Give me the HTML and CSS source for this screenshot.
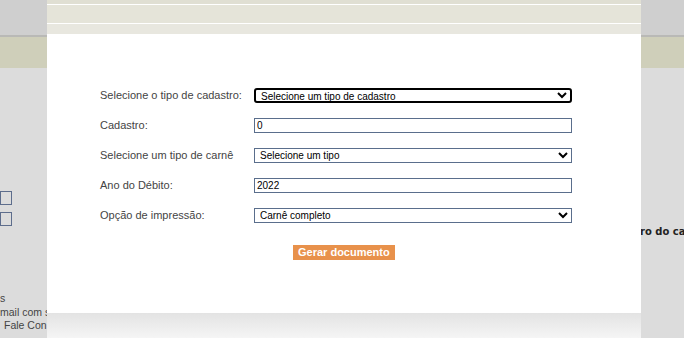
FILE: index.html
```html
<!DOCTYPE html>
<html lang="pt-BR">
  <head>
    <meta charset="UTF-8" />
    <title>Emissão de carnê</title>
    <link rel="stylesheet" href="styles.css">
  </head>
  <body>
    <div class="topbar"></div>
    <div class="menubar"></div>
    <div class="page">
      <div class="side">
        <div class="side-fields">
          <input class="side-input" type="text">
          <input class="side-input" type="text">
        </div>
        <div class="side-text">
          <div class="line-s">s</div>
          <div class="line-m">mail com s</div>
          <div class="line-f">Fale Con</div>
        </div>
      </div>
      <div class="gap"></div>
      <div class="aside">
        <div class="aside-title">ro do ca</div>
      </div>
    </div>

    <div class="modal">
      <div class="modal-head">
        <div class="stripe s1"></div>
        <div class="stripe s2"></div>
        <div class="stripe s3"></div>
      </div>
      <div class="modal-body">
        <form class="form">
          <label>Selecione o tipo de cadastro:</label>
          <select class="field focused">
            <option>Selecione um tipo de cadastro</option>
          </select>

          <label>Cadastro:</label>
          <input class="field" type="text" value="0">

          <label>Selecione um tipo de carnê</label>
          <select class="field">
            <option>Selecione um tipo</option>
          </select>

          <label>Ano do Débito:</label>
          <input class="field" type="text" value="2022">

          <label>Opção de impressão:</label>
          <select class="field">
            <option>Carnê completo</option>
          </select>
        </form>
        <div class="actions">
          <button type="button" class="btn">Gerar documento</button>
        </div>
      </div>
      <div class="modal-foot"></div>
    </div>
  </body>
</html>
```

FILE: styles.css
```css
body {
  margin: 0;
  background: #dcdcdc;
  font-family: "Liberation Sans", Arial, sans-serif;
  color: #444;
  height: 338px;
  overflow: hidden;
}
.topbar {
  height: 35px;
  background: #cfcfcf;
  border-bottom: 2px solid #b9b9b6;
}
.menubar {
  height: 31px;
  background: #cfcfba;
}
.page {
  display: grid;
  grid-template-columns: 47px 1fr 44px;
}
.side-fields {
  display: flex;
  flex-direction: column;
  gap: 7px;
  padding-top: 123px;
}
.side-input {
  box-sizing: border-box;
  width: 12px;
  height: 14px;
  margin: 0;
  padding: 0;
  border: 1px solid #5d6d8c;
  background: #dcdcdc;
}
.side-text {
  padding-top: 66px;
  font-size: 10.5px;
  line-height: 13.5px;
  color: #444;
  white-space: nowrap;
}
.line-f {
  margin-left: 4px;
}
.aside {
  padding-top: 158px;
}
.aside-title {
  white-space: nowrap;
  font-family: "DejaVu Sans", Verdana, sans-serif;
  font-weight: bold;
  font-size: 10px;
  color: #222;
}

/* janela modal */
.modal {
  position: fixed;
  top: 0;
  left: 47px;
  width: 594px;
  height: 338px;
  display: flex;
  flex-direction: column;
  background: #fff;
}
.stripe.s1 {
  height: 4px;
  background: #e0dfd3;
  border-bottom: 1px solid #fff;
}
.stripe.s2 {
  height: 18px;
  background: #e5e4d9;
  border-bottom: 1px solid #fff;
}
.stripe.s3 {
  height: 10px;
  background: #e8e7df;
}
.modal-body {
  flex-grow: 1;
  padding: 54px 0 0 53px;
}
.form {
  display: grid;
  grid-template-columns: 154px 318px;
  row-gap: 15px;
  align-items: center;
}
.form label {
  font-size: 11px;
  line-height: 13px;
  white-space: nowrap;
  color: #444;
}
.field {
  box-sizing: border-box;
  width: 318px;
  height: 15px;
  margin: 0;
  padding: 0 2px;
  border: 1px solid #5a6e8c;
  border-radius: 0;
  background: #fff;
  font-family: "Liberation Sans", Tahoma, sans-serif;
  font-size: 10px;
  color: #000;
  outline: none;
}
select.field {
  padding: 0 1px;
}
.field.focused {
  border: 2px solid #000;
  border-radius: 3px;
}
.actions {
  padding: 19px 0 0 193px;
}
.btn {
  height: 15px;
  padding: 0 5px;
  border: none;
  background: #e8914b;
  color: #fff;
  font-family: "Liberation Sans", Arial, sans-serif;
  font-weight: bold;
  font-size: 11px;
  line-height: 15px;
  cursor: pointer;
}
.modal-foot {
  height: 25px;
  background: linear-gradient(#e3e3e3, #f5f5f5);
}
```
